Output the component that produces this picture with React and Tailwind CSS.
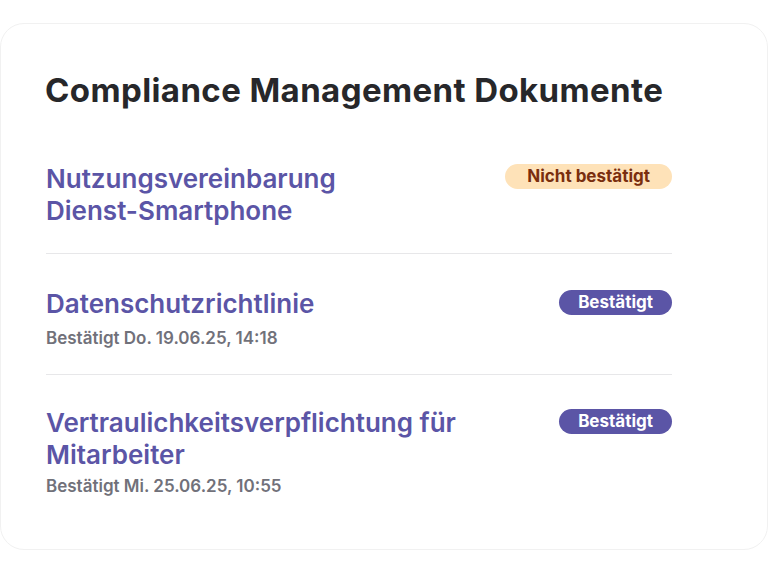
export default function App() {
  const items = [
    { title: "Nutzungsvereinbarung Dienst-Smartphone", status: "no", sub: null, w: "max-w-[340px]", row: "pt-[32px] pb-[26px] border-b border-[#e7e7e9]", gap: "gap-[5px]" },
    { title: "Datenschutzrichtlinie", status: "yes", sub: "Bestätigt Do. 19.06.25, 14:18", w: "max-w-[480px]", row: "pt-[34px] pb-[24px] border-b border-[#e7e7e9]", gap: "gap-[6px]" },
    { title: "Vertraulichkeitsverpflichtung für Mitarbeiter", status: "yes", sub: "Bestätigt Mi. 25.06.25, 10:55", w: "max-w-[480px]", row: "pt-[32px] pb-[24px]", gap: "gap-[3px]" },
  ];
  return (
    <div className="min-h-[573px] bg-white pt-[23px]" style={{ fontFamily: "Inter, 'Noto Sans', sans-serif" }}>
      <div className="w-[768px] h-[527px] rounded-[24px] border border-[#f1f1f1] bg-white pl-[44px] pr-[95px] pt-[47px]">
        <h1 className="text-[33px] leading-[38px] font-bold text-[#27272a] tracking-[0.4px]">Compliance Management Dokumente</h1>
        <div className="mt-[22px] pl-[1px]">
          {items.map((it, i) => (
            <div key={i} className={`flex justify-between items-start ${it.row}`}>
              <div className={`flex flex-col ${it.gap}`}>
                <div className={`text-[26px] leading-[32px] font-semibold text-[#5b55a6] ${it.w}`}>{it.title}</div>
                {it.sub && <div className="text-[17px] leading-[24px] font-semibold text-[#71717a]">{it.sub}</div>}
              </div>
              {it.status === "no" ? (
                <span className="mt-[1px] shrink-0 rounded-full bg-[#fee2b8] px-[22px] h-[25px] flex items-center text-[17px] font-bold text-[#7a2e0e]">Nicht bestätigt</span>
              ) : (
                <span className="mt-[2px] shrink-0 rounded-full bg-[#5b55a6] px-[19px] h-[25px] flex items-center text-[17px] font-bold text-white">Bestätigt</span>
              )}
            </div>
          ))}
        </div>
      </div>
    </div>
  );
}
